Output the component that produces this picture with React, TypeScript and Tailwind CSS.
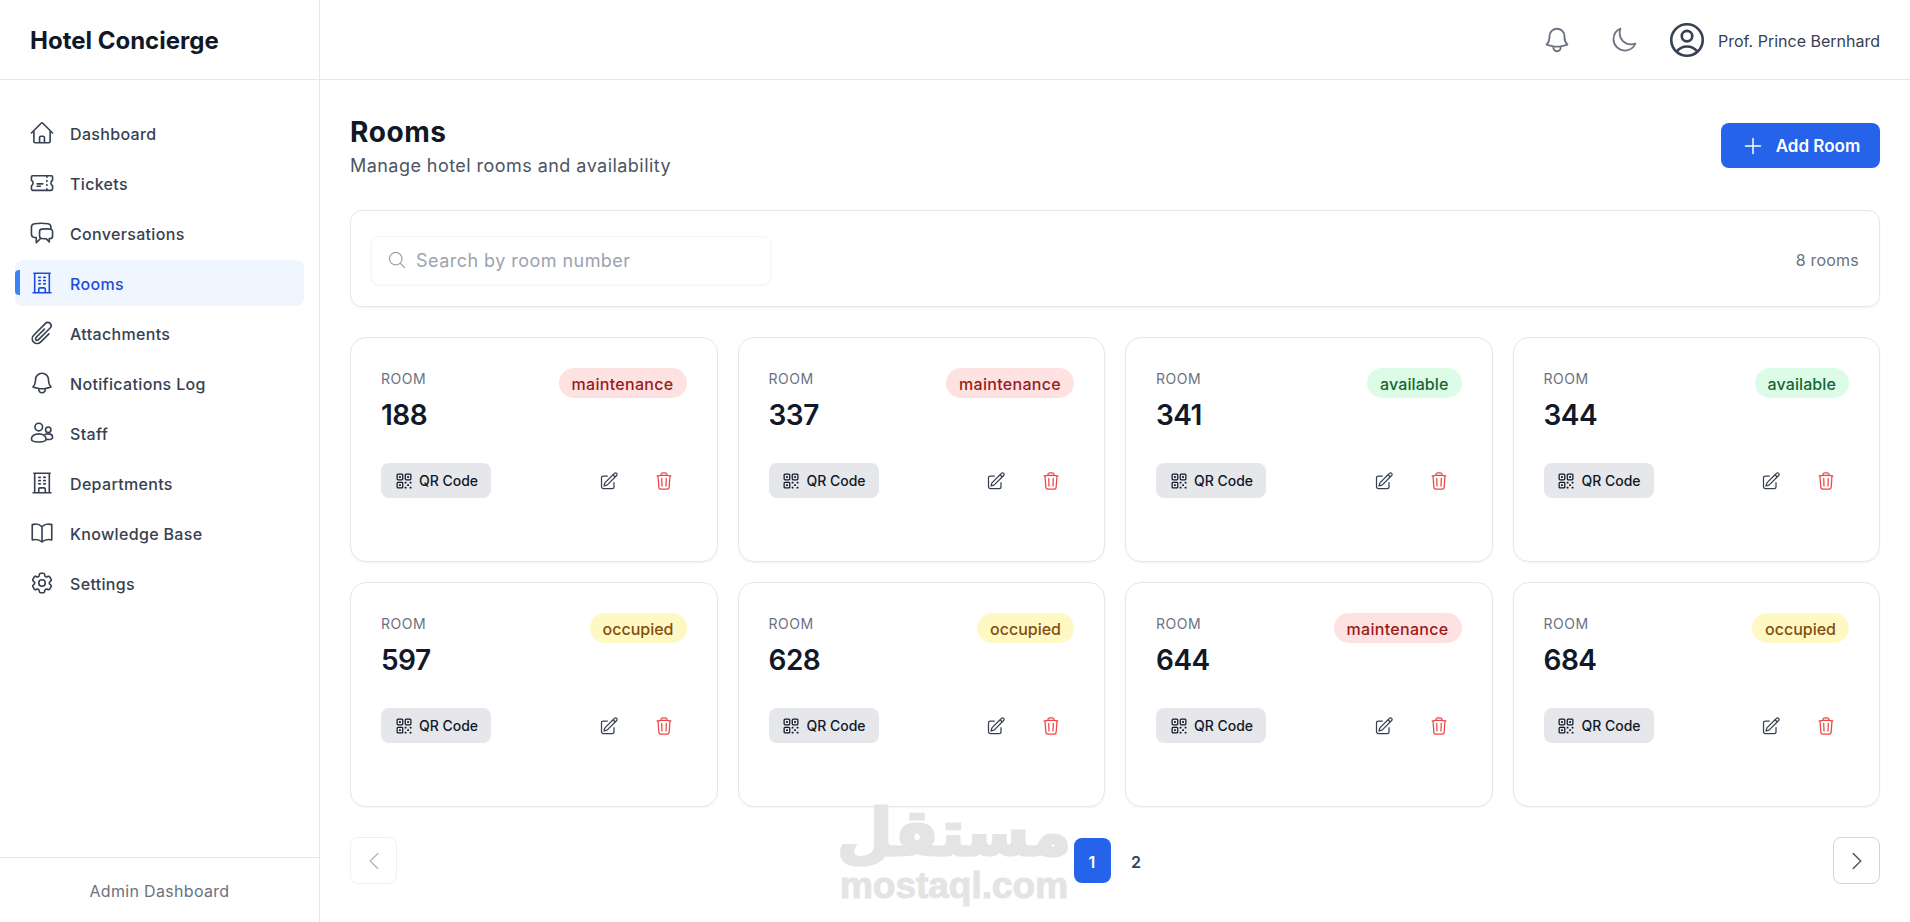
import React from 'react';
import {
  HiOutlineHome,
  HiOutlineTicket,
  HiOutlineChatBubbleLeftRight,
  HiOutlineBuildingOffice,
  HiOutlinePaperClip,
  HiOutlineBell,
  HiOutlineBookOpen,
  HiOutlineCog6Tooth,
  HiOutlineMoon,
  HiOutlineUserCircle,
  HiOutlinePlus,
  HiOutlineMagnifyingGlass,
  HiOutlineQrCode,
  HiOutlinePencilSquare,
  HiOutlineTrash,
  HiOutlineChevronLeft,
  HiOutlineChevronRight,
} from 'react-icons/hi2';

const StaffIcon: React.FC<{ className?: string }> = ({ className }) => (
  <svg viewBox="0 0 24 24" fill="none" stroke="currentColor" strokeWidth={1.5} strokeLinecap="round" strokeLinejoin="round" className={className}>
    <circle cx="9" cy="6.5" r="3.5" />
    <circle cx="17.75" cy="9" r="2.5" />
    <path d="M2.25 17.5c0-2.8 3-4.75 6.75-4.75s6.75 1.95 6.75 4.75c0 1.6-3 2.75-6.75 2.75s-6.75-1.15-6.75-2.75Z" />
    <path d="M15 13.2c.8-.3 1.75-.45 2.75-.45 2.4 0 4 1.3 4 3.1 0 1.3-1.6 2.15-4 2.15-.5 0-.95-.03-1.4-.1" />
  </svg>
);

const navItems = [
  { label: 'Dashboard', icon: HiOutlineHome },
  { label: 'Tickets', icon: HiOutlineTicket },
  { label: 'Conversations', icon: HiOutlineChatBubbleLeftRight },
  { label: 'Rooms', icon: HiOutlineBuildingOffice, active: true },
  { label: 'Attachments', icon: HiOutlinePaperClip },
  { label: 'Notifications Log', icon: HiOutlineBell },
  { label: 'Staff', icon: StaffIcon },
  { label: 'Departments', icon: HiOutlineBuildingOffice },
  { label: 'Knowledge Base', icon: HiOutlineBookOpen },
  { label: 'Settings', icon: HiOutlineCog6Tooth },
];

const rooms = [
  { number: '188', status: 'maintenance' },
  { number: '337', status: 'maintenance' },
  { number: '341', status: 'available' },
  { number: '344', status: 'available' },
  { number: '597', status: 'occupied' },
  { number: '628', status: 'occupied' },
  { number: '644', status: 'maintenance' },
  { number: '684', status: 'occupied' },
];

const statusStyles: Record<string, string> = {
  maintenance: 'bg-[#fee2e2] text-[#991b1b] tracking-[0.3px]',
  available: 'bg-[#dcfce7] text-[#166534] tracking-[0.1px]',
  occupied: 'bg-[#fef9c3] text-[#854d0e]',
};

const Sidebar: React.FC = () => (
  <aside className="w-80 h-full flex flex-col border-r border-[#e5e7eb] shrink-0">
    <div className="h-20 shrink-0 flex items-center px-[30px] border-b border-[#e5e7eb]">
      <span className="text-2xl font-bold text-[#111827] pt-[3px]">Hotel Concierge</span>
    </div>
    <nav className="flex-1 pt-[30px] px-[15px] flex flex-col gap-[4px]">
      {navItems.map(item => {
        const Icon = item.icon;
        return (
          <div
            key={item.label}
            className={`relative h-[46px] rounded-lg flex items-center pl-[14px] text-[16px] font-medium tracking-[0.33px] ${item.active ? 'bg-[#eff6ff] text-[#1d4ed8]' : 'text-[#374151]'}`}
          >
            {item.active && <span className="absolute left-0 top-[10px] h-[25px] w-[5px] rounded-l-sm bg-[#3b82f6]" />}
            <Icon className="w-[26px] h-[26px] shrink-0" />
            <span className="ml-[15px] pt-[2px]">{item.label}</span>
          </div>
        );
      })}
    </nav>
    <div className="h-[65px] shrink-0 border-t border-[#e5e7eb] flex items-center justify-center text-[16px] tracking-[0.32px] text-[#6b7280] pt-[2px]">
      Admin Dashboard
    </div>
  </aside>
);

const Header: React.FC = () => (
  <header className="h-20 shrink-0 border-b border-[#e5e7eb] flex items-center justify-end px-[30px]">
    <HiOutlineBell className="w-[30px] h-[30px] text-[#6b7280]" />
    <HiOutlineMoon className="w-[28px] h-[28px] text-[#6b7280] ml-[38px]" />
    <HiOutlineUserCircle className="w-[42px] h-[42px] text-[#374151] ml-[28px]" />
    <span className="ml-[10px] text-[16px] text-[#374151] pt-[2px]">Prof. Prince Bernhard</span>
  </header>
);

const RoomCard: React.FC<{ number: string; status: string }> = ({ number, status }) => (
  <div className="h-[225px] rounded-2xl border border-[#e5e7eb] shadow-xs p-[30px]">
    <div className="flex justify-between items-start">
      <div>
        <div className="pt-[1px] text-[14px] text-[#6b7280] leading-5 tracking-[0.5px]">ROOM</div>
        <div className="mt-[5px] text-[28px] font-semibold text-[#111827] leading-[42px] tracking-[-0.5px]">{number}</div>
      </div>
      <span className={`rounded-full px-[13px] h-[30px] pt-[2px] flex items-center text-[16px] font-medium ${statusStyles[status]}`}>{status}</span>
    </div>
    <div className="flex items-center justify-between mt-[27px]">
      <button className="h-[35px] w-[110px] rounded-lg bg-[#e5e7eb] flex items-center justify-center gap-[5px] text-[14px] font-medium text-[#111827]">
        <HiOutlineQrCode className="w-5 h-5" />
        QR Code
      </button>
      <div className="flex items-center gap-[35px] pr-[13px]">
        <HiOutlinePencilSquare className="w-5 h-5 text-[#374151]" />
        <HiOutlineTrash className="w-5 h-5 text-[#ef4444]" />
      </div>
    </div>
  </div>
);

const App: React.FC = () => (
  <div className="relative h-[922px] w-full flex bg-white overflow-hidden font-['Inter',sans-serif]">
    <Sidebar />
    <div className="flex-1 min-w-0 flex flex-col">
      <Header />
      <main className="flex-1 px-[30px] pt-[35px]">
        <div className="flex justify-between items-start">
          <div>
            <h1 className="text-[28px] font-bold text-[#111827] leading-[35px] tracking-[0.6px]">Rooms</h1>
            <p className="text-[18px] text-[#4b5563] leading-[31px] tracking-[0.45px]">Manage hotel rooms and availability</p>
          </div>
          <button className="mt-[8px] h-[45px] w-[159px] rounded-lg bg-[#2563eb] text-white flex items-center justify-center gap-[11px] text-[17px] font-semibold">
            <HiOutlinePlus className="w-6 h-6" />
            <span className="pt-[2px]">Add Room</span>
          </button>
        </div>
        <div className="mt-[29px] h-[97px] rounded-xl border border-[#e5e7eb] shadow-xs flex items-center justify-between px-5 pt-[3px]">
          <div className="w-[400px] h-[49px] rounded-lg border border-[#f6f6f7] shadow-xs flex items-center pl-[15px] gap-[9px]">
            <HiOutlineMagnifyingGlass className="w-[20px] h-[20px] text-[#9ca3af]" />
            <span className="text-[18px] text-[#9ca3af] tracking-[0.46px]">Search by room number</span>
          </div>
          <span className="text-[16px] text-[#6b7280] tracking-[0.2px]">8 rooms</span>
        </div>
        <div className="mt-[30px] grid grid-cols-4 gap-[20px]">
          {rooms.map(r => <RoomCard key={r.number} number={r.number} status={r.status} />)}
        </div>
        <div className="mt-[30px] flex items-center justify-between">
          <button className="w-[47px] h-[47px] rounded-lg border border-[#eef0f2] flex items-center justify-center text-[#b4b9c1]">
            <HiOutlineChevronLeft className="w-6 h-6" />
          </button>
          <div className="flex items-center gap-[7px] mr-[2px]">
            <span className="w-[37px] h-[45px] pt-[2px] rounded-lg bg-[#2563eb] text-white text-[16px] font-semibold flex items-center justify-center">1</span>
            <span className="w-[37px] h-[45px] pt-[2px] text-[#374151] text-[16px] font-semibold flex items-center justify-center">2</span>
          </div>
          <button className="w-[47px] h-[47px] rounded-lg border border-[#d1d5db] flex items-center justify-center text-[#4b5563]">
            <HiOutlineChevronRight className="w-6 h-6" />
          </button>
        </div>
      </main>
    </div>
    <div className="absolute left-[840px] top-[800px] w-[228px] flex flex-col items-center text-[#e4e4e4] pointer-events-none">
      <span className="text-[64px] font-bold leading-[66px] font-['DejaVu_Sans',sans-serif] [-webkit-text-stroke:3px_#e4e4e4]">مستقل</span>
      <span className="text-[37px] font-bold leading-[40px] font-['Liberation_Sans',sans-serif] [-webkit-text-stroke:1px_#e4e4e4]">mostaql.com</span>
    </div>
  </div>
);

export default App;
